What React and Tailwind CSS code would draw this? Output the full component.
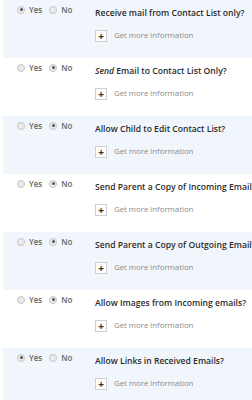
import React from 'react';

const settings = [
  { title: 'Receive mail from Contact List only?', value: 'yes' },
  { title: 'Email to Contact List Only?', italic: 'Send', value: 'no' },
  { title: 'Allow Child to Edit Contact List?', value: 'no' },
  { title: 'Send Parent a Copy of Incoming Emails?', value: 'no' },
  { title: 'Send Parent a Copy of Outgoing Emails?', value: 'no' },
  { title: 'Allow Images from Incoming emails?', value: 'no' },
  { title: 'Allow Links in Received Emails?', value: 'yes' },
];

function Radio({ checked, label }) {
  return (
    <span className="flex items-center gap-[4px]">
      <span className="w-[8px] h-[8px] rounded-full border border-[#c4c4c4] bg-[#ececec] flex items-center justify-center">
        {checked && <span className="w-[3px] h-[3px] rounded-full bg-[#555]" />}
      </span>
      <span className="text-[8px] font-semibold text-[#666]">{label}</span>
    </span>
  );
}

function SettingRow({ setting, shaded }) {
  return (
    <div className={`h-[58px] ml-[3px] flex overflow-hidden ${shaded ? 'bg-[#f1f6fc]' : 'bg-white'}`}>
      <div className="w-[92px] flex gap-[7px] pl-[14px] pt-[7px] h-[12px] items-center">
        <Radio checked={setting.value === 'yes'} label="Yes" />
        <Radio checked={setting.value === 'no'} label="No" />
      </div>
      <div className="flex-1 min-w-0 pt-[6px]">
        <p className="text-[8.6px] font-semibold text-[#2b2b2b] whitespace-nowrap leading-[14px]">
          {setting.italic && <em>{setting.italic} </em>}
          {setting.title}
        </p>
        <div className="flex items-center gap-[7px] mt-[10px]">
          <span className="w-[12px] h-[12px] border border-[#cfcfcf] bg-white flex items-center justify-center text-[10px] leading-none text-[#333] font-bold">
            +
          </span>
          <span className="text-[7.8px] text-[#8a8a8a]">Get more information</span>
        </div>
      </div>
    </div>
  );
}

export default function App() {
  return (
    <div className="w-[252px] h-[400px] overflow-hidden bg-white" style={{ fontFamily: '"Open Sans", sans-serif' }}>
      {settings.map((s, i) => (
        <SettingRow key={s.title} setting={s} shaded={i % 2 === 0} />
      ))}
    </div>
  );
}
